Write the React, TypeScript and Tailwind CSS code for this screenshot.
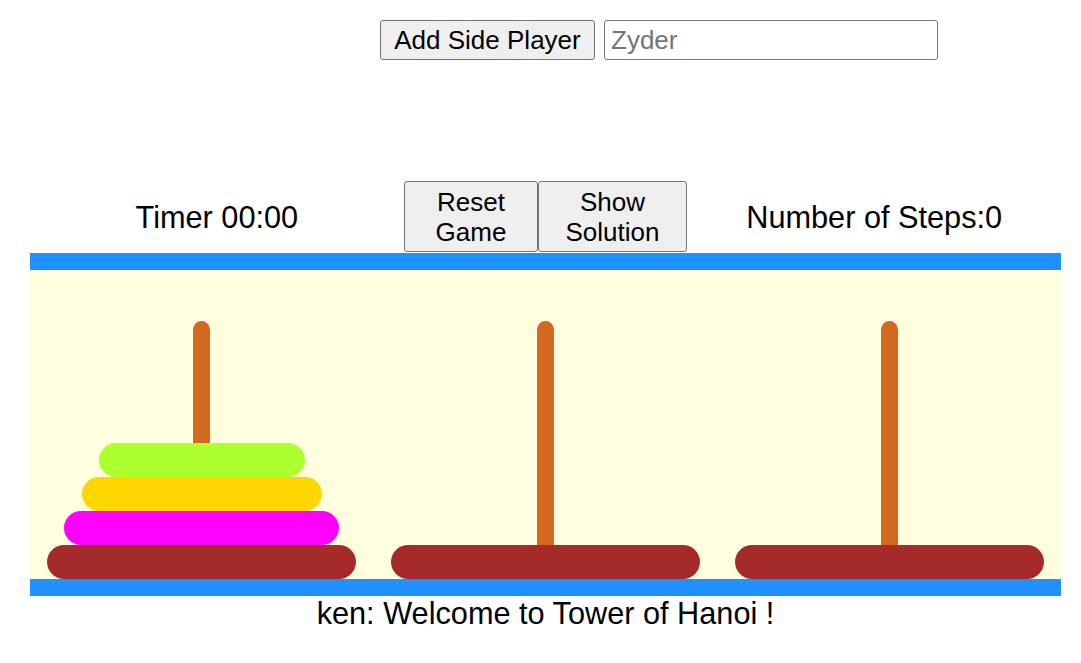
import React from "react";

const pegs = [
  { disks: ["bg-[#adff2f] w-[60%]", "bg-[#ffd700] w-[70%]", "bg-[#ff00ff] w-[80%]", "bg-[#a52a2a] w-[90%]"] },
  { disks: ["bg-[#a52a2a] w-[90%]"] },
  { disks: ["bg-[#a52a2a] w-[90%]"] },
];

const App: React.FC = () => {
  return (
    <div
      className="w-[1081px] h-[663px] bg-white text-black overflow-hidden"
      style={{ fontFamily: '"Liberation Sans", Arial, sans-serif' }}
    >
      {/* Side player */}
      <div className="flex items-center gap-[9px] pl-[380px] pt-[20px]">
        <button className="h-[40px] w-[215px] text-[26px] leading-none bg-[#efefef] border border-[#767676] rounded-[3px]">
          Add Side Player
        </button>
        <input
          className="h-[40px] w-[334px] text-[26px] px-[6px] border border-[#767676] rounded-[3px] outline-none placeholder:text-[#757575]"
          placeholder="Zyder"
        />
      </div>

      {/* Header */}
      <div className="ml-[30px] w-[1031px] mt-[121px] grid grid-cols-3 items-center">
        <div className="text-center text-[30.7px] pl-[30px] pt-[3px]">Timer 00:00</div>
        <div className="flex justify-center">
          <button className="w-[134px] h-[71px] text-[26px] leading-[30px] bg-[#efefef] border border-[#767676] rounded-[3px]">
            Reset
            <br />
            Game
          </button>
          <button className="w-[149px] h-[71px] text-[26px] leading-[30px] bg-[#efefef] border border-[#767676] rounded-[3px]">
            Show
            <br />
            Solution
          </button>
        </div>
        <div className="text-center text-[30.7px] pr-[30px] pt-[3px]">Number of Steps:0</div>
      </div>

      {/* Board */}
      <div className="ml-[30px] w-[1031px] mt-[1px] h-[343px] border-y-[17px] border-[#1e90ff] bg-[#ffffe0] grid grid-cols-3">
        {pegs.map((peg, i) => (
          <div key={i} className="flex flex-col items-center pt-[51px]">
            <div className="flex-1 w-[17px] rounded-t-full bg-[#d2691e]" />
            {peg.disks.map((d, j) => (
              <div key={j} className={`h-[34px] shrink-0 rounded-full ${d}`} />
            ))}
          </div>
        ))}
      </div>

      <div className="ml-[30px] w-[1031px] text-center text-[30.7px] leading-[34px] mt-[1px]">
        ken: Welcome to Tower of Hanoi !
      </div>
    </div>
  );
};

export default App;
